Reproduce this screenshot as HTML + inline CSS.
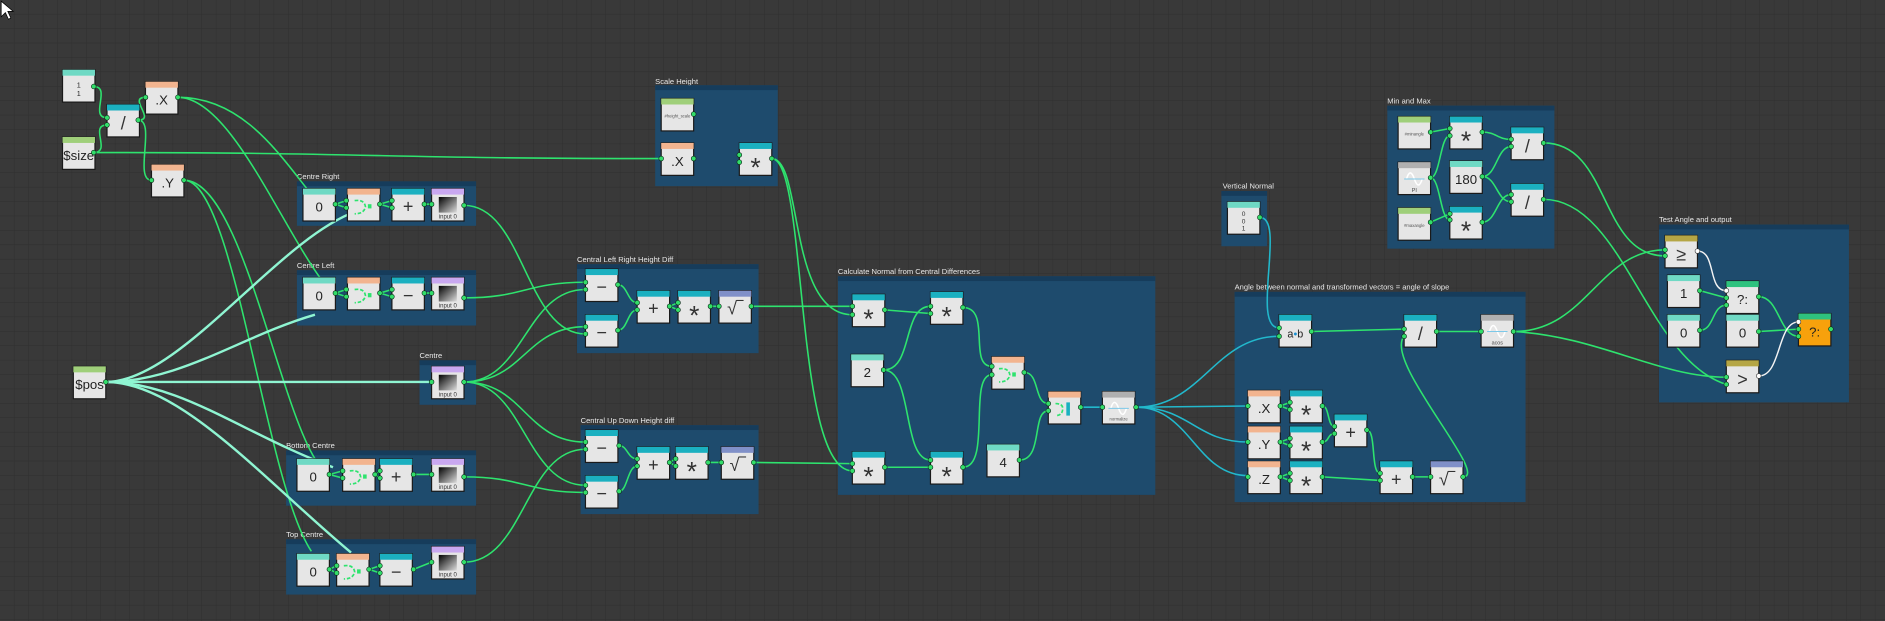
<!DOCTYPE html>
<html><head><meta charset="utf-8"><style>
html,body{margin:0;padding:0;background:#383838;overflow:hidden}
svg{display:block}
text{font-family:"Liberation Sans",sans-serif}
.w{fill:none;stroke:#2ee36e;stroke-width:1.3}
.m{fill:none;stroke:#8ff5d2;stroke-width:2}
.c{fill:none;stroke:#22b8cc;stroke-width:1.3}
.wh{fill:none;stroke:#f4f4f4;stroke-width:1.2}
.g{fill:#1e4b6d}
.gh{fill:#163c5b}
.lbl{font-size:6.3px;fill:#e8e8e8}
.sym{font-size:15px;fill:#333;text-anchor:middle}
.ast{font-size:22px;fill:#333;text-anchor:middle}
.num{font-size:11px;fill:#222;text-anchor:middle}
.tiny{font-size:3.5px;fill:#555;text-anchor:middle}
</style></head><body>
<svg width="1885" height="621" viewBox="0 0 1568 517" preserveAspectRatio="none" xmlns="http://www.w3.org/2000/svg">
<defs>
<pattern id="grid" width="12" height="12" patternUnits="userSpaceOnUse">
<rect width="12" height="12" fill="#393939"/>
<path d="M12 0V12H0" fill="none" stroke="#2f2f2f" stroke-width="0.8"/>
</pattern>
<linearGradient id="ig" x1="0" y1="0" x2="1" y2="1"><stop offset="0" stop-color="#000"/><stop offset="1" stop-color="#ddd"/></linearGradient>
<g id="body"><rect x="0" y="0" width="27" height="27" fill="#e6e6e6" stroke="#1a1a1a" stroke-width="1"/></g>
<g id="inp"><rect x="6" y="7" width="15" height="13" fill="url(#ig)"/><text x="13.5" y="25" style="font-size:5px;fill:#333;text-anchor:middle">input 0</text></g>
<g id="comb"><path d="M6 10 Q14 9 15 15 Q14 21 6 21" fill="none" stroke="#2ee36e" stroke-width="1.4" stroke-dasharray="3 1.5"/><rect x="17" y="13" width="3" height="3.5" fill="#2ee36e"/></g>
<g id="cos"><path d="M7 14 Q10 4 13.5 14 Q17 24 20 14" fill="none" stroke="#fff" stroke-width="1.3"/><path d="M5 14H22" stroke="#7cc8e8" stroke-width="0.8"/></g>
</defs>
<rect width="1568" height="517" fill="url(#grid)"/>
<path d="M1 1 L1 14 L4.5 10.5 L7 16 L9 15 L6.5 9.5 L11 9.5 Z" fill="#fff" stroke="#000" stroke-width="0.6"/>

<g>
<text class="lbl" x="545" y="70">Scale Height</text><rect class="g" x="545" y="71" width="102" height="84"/><rect class="gh" x="545" y="71" width="102" height="4"/>
<text class="lbl" x="247" y="149">Centre Right</text><rect class="g" x="247" y="151" width="149" height="37"/><rect class="gh" x="247" y="151" width="149" height="4"/>
<text class="lbl" x="247" y="223">Centre Left</text><rect class="g" x="247" y="225" width="149" height="46"/><rect class="gh" x="247" y="225" width="149" height="4"/>
<text class="lbl" x="349" y="298">Centre</text><rect class="g" x="349" y="300" width="47" height="37"/><rect class="gh" x="349" y="300" width="47" height="4"/>
<text class="lbl" x="238" y="373">Bottom Centre</text><rect class="g" x="238" y="375" width="158" height="46"/><rect class="gh" x="238" y="375" width="158" height="4"/>
<text class="lbl" x="238" y="447">Top Centre</text><rect class="g" x="238" y="449" width="158" height="46"/><rect class="gh" x="238" y="449" width="158" height="4"/>
<text class="lbl" x="480" y="218">Central Left Right Height Diff</text><rect class="g" x="480" y="220" width="151" height="74"/><rect class="gh" x="480" y="220" width="151" height="4"/>
<text class="lbl" x="483" y="352">Central Up Down Height diff</text><rect class="g" x="483" y="354" width="148" height="74"/><rect class="gh" x="483" y="354" width="148" height="4"/>
<text class="lbl" x="697" y="228">Calculate Normal from Central Differences</text><rect class="g" x="697" y="230" width="264" height="182"/><rect class="gh" x="697" y="230" width="264" height="4"/>
<text class="lbl" x="1017" y="157">Vertical Normal</text><rect class="g" x="1016" y="159" width="38" height="46"/><rect class="gh" x="1016" y="159" width="38" height="4"/>
<text class="lbl" x="1027" y="241">Angle between normal and transformed vectors = angle of slope</text><rect class="g" x="1027" y="243" width="242" height="175"/><rect class="gh" x="1027" y="243" width="242" height="4"/>
<text class="lbl" x="1154" y="86">Min and Max</text><rect class="g" x="1154" y="88" width="139" height="119"/><rect class="gh" x="1154" y="88" width="139" height="4"/>
<text class="lbl" x="1380" y="185">Test Angle and output</text><rect class="g" x="1380" y="187" width="158" height="148"/><rect class="gh" x="1380" y="187" width="158" height="4"/>
</g>

<g>
<path class="w" d="M78 72 C93 72 74 98 89 98"/>
<path class="w" d="M78 127 C93 127 74 104 89 104"/>
<path class="w" d="M115 100 C130 100 106 81 121 81"/>
<path class="w" d="M115 100 C130 100 111 150 126 150"/>
<path class="w" d="M78 127 C314 127 314 132 550 132"/>
<path class="w" d="M148 81 C200 81 230 125 256 158"/>
<path class="w" d="M148 81 C190 81 230 180 266 231"/>
<path class="w" d="M153 150 C200 150 230 330 262 382"/>
<path class="w" d="M153 150 C195 150 220 400 259 459"/>
<path class="m" d="M88 318 C150 318 230 200 296 176"/>
<path class="m" d="M88 318 C150 318 200 280 262 262"/>
<path class="m" d="M88 318 L359 318"/>
<path class="m" d="M88 318 C150 318 200 360 277 389"/>
<path class="m" d="M88 318 C150 318 220 400 292 460"/>
<path class="w" d="M279 170 L288 167 M279 170 L288 173 M316 170 L326 167 M316 170 L326 173 M353 170 L359 170"/>
<path class="w" d="M279 244 L288 241 M279 244 L288 247 M316 244 L326 241 M316 244 L326 247 M353 244 L359 244"/>
<path class="w" d="M274 395 L285 392 M274 395 L285 398 M312 395 L316 392 M312 395 L316 398 M344 395 L359 395"/>
<path class="w" d="M274 474 L280 471 M274 474 L280 477 M307 474 L316 471 M307 474 L316 477 M344 474 L359 468"/>
<path class="w" d="M386 171 C436 171 437 278 487 278"/>
<path class="w" d="M386 248 C436 248 437 235 487 235"/>
<path class="w" d="M386 318 C436 318 437 241 487 241"/>
<path class="w" d="M386 318 C436 318 437 272 487 272"/>
<path class="w" d="M386 318 C436 318 437 368 487 368"/>
<path class="w" d="M386 318 C436 318 437 404 487 404"/>
<path class="w" d="M386 397 C436 397 437 410 487 410"/>
<path class="w" d="M386 468 C436 468 437 374 487 374"/>
<path class="w" d="M514 237 C522 237 522 252 530 252 M514 275 C522 275 522 258 530 258 M557 255 L564 252 M557 255 L564 258 M591 255 L598 255"/>
<path class="w" d="M515 371 C522 371 522 382 530 382 M515 409 C522 409 522 388 530 388 M557 385 L562 382 M557 385 L562 388 M589 385 L600 385"/>
<path class="w" d="M625 255 L709 255"/>
<path class="w" d="M627 385 L709 386"/>
<path class="w" d="M642 132 C668 132 655 262 709 262"/>
<path class="w" d="M642 132 C672 132 660 392 709 392"/>
<path class="w" d="M736 258 L774 261"/>
<path class="w" d="M735 308 C760 308 750 255 774 255"/>
<path class="w" d="M735 308 C760 308 750 383 774 383"/>
<path class="w" d="M736 389 L774 389"/>
<path class="w" d="M801 256 C825 256 805 305 825 305"/>
<path class="w" d="M801 389 C825 389 805 312 825 312"/>
<path class="w" d="M852 310 C865 310 860 336 872 336"/>
<path class="w" d="M848 383 C868 383 858 342 872 342"/>
<path class="c" d="M899 339 L917 339"/>
<path class="c" d="M945 339 C1000 339 1010 280 1064 280"/>
<path class="c" d="M945 339 L1038 338"/>
<path class="c" d="M945 339 C990 339 995 368 1038 368"/>
<path class="c" d="M945 339 C990 339 995 396 1038 396"/>
<path class="c" d="M1048 181 C1070 181 1040 273 1064 273"/>
<path class="w" d="M1065 338 L1073 335 M1065 338 L1073 341 M1065 368 L1073 365 M1065 368 L1073 371 M1065 397 L1073 394 M1065 397 L1073 400"/>
<path class="w" d="M1100 338 C1106 338 1104 355 1110 355 M1100 368 C1106 368 1104 361 1110 361"/>
<path class="w" d="M1137 358 C1145 358 1140 394 1148 394 M1100 397 L1148 400 M1175 397 L1190 397"/>
<path class="w" d="M1091 276 L1168 274"/>
<path class="w" d="M1217 397 C1240 397 1150 300 1168 280"/>
<path class="w" d="M1195 276 L1232 276"/>
<path class="w" d="M1259 276 C1320 276 1330 208 1385 208"/>
<path class="w" d="M1259 276 C1330 280 1380 314 1436 314"/>
<path class="w" d="M1190 110 L1206 107"/>
<path class="w" d="M1190 148 C1198 148 1198 113 1206 113"/>
<path class="w" d="M1190 148 C1198 148 1198 183 1206 183"/>
<path class="w" d="M1190 185 L1206 178"/>
<path class="w" d="M1233 110 C1245 110 1245 116 1257 116"/>
<path class="w" d="M1233 147 C1245 147 1245 122 1257 122"/>
<path class="w" d="M1233 147 C1245 147 1245 168 1257 168"/>
<path class="w" d="M1233 185 C1245 185 1245 162 1257 162"/>
<path class="w" d="M1284 119 C1340 119 1330 213 1385 213"/>
<path class="w" d="M1284 166 C1350 166 1370 300 1436 320"/>
<path class="wh" d="M1412 209 C1428 209 1420 242 1436 242"/>
<path class="w" d="M1414 242 L1436 248"/>
<path class="w" d="M1414 275 C1426 275 1424 254 1436 254"/>
<path class="w" d="M1463 247 C1480 247 1480 280 1496 280"/>
<path class="w" d="M1463 276 L1496 274"/>
<path class="wh" d="M1463 313 C1482 313 1478 268 1496 268"/>
</g>

<g>
<g transform="translate(52,58)"><use href="#body"/><rect width="27" height="5" fill="#6fd9c4"/><text x="13.5" y="15" style="font-size:6px;fill:#222;text-anchor:middle">1</text><text x="13.5" y="22" style="font-size:6px;fill:#222;text-anchor:middle">1</text></g>
<g transform="translate(89,87)"><use href="#body"/><rect width="27" height="5" fill="#1bb0c0"/><text class="sym" x="13.5" y="21">/</text></g>
<g transform="translate(121,68)"><use href="#body"/><rect width="27" height="5" fill="#f2b48f"/><text class="num" x="13.5" y="19">.X</text></g>
<g transform="translate(52,114)"><use href="#body"/><rect width="27" height="5" fill="#9fcf7a"/><text class="num" x="13.5" y="19">$size</text></g>
<g transform="translate(126,137)"><use href="#body"/><rect width="27" height="5" fill="#f2b48f"/><text class="num" x="13.5" y="19">.Y</text></g>
<g transform="translate(61,305)"><use href="#body"/><rect width="27" height="5" fill="#9fcf7a"/><text class="num" x="13.5" y="19">$pos</text></g>
<g transform="translate(550,82)"><use href="#body"/><rect width="27" height="5" fill="#9fcf7a"/><text class="tiny" x="13.5" y="16">#height_scale</text></g>
<g transform="translate(550,119)"><use href="#body"/><rect width="27" height="5" fill="#f2b48f"/><text class="num" x="13.5" y="19">.X</text></g>
<g transform="translate(615,119)"><use href="#body"/><rect width="27" height="5" fill="#1bb0c0"/><text class="ast" x="13.5" y="28">*</text></g>
<g transform="translate(252,157)"><use href="#body"/><rect width="27" height="5" fill="#6fd9c4"/><text class="num" x="13.5" y="19">0</text></g>
<g transform="translate(289,157)"><use href="#body"/><rect width="27" height="5" fill="#f2b48f"/><use href="#comb"/></g>
<g transform="translate(326,157)"><use href="#body"/><rect width="27" height="5" fill="#1bb0c0"/><text class="sym" x="13.5" y="20">+</text></g>
<g transform="translate(359,157)"><use href="#body"/><rect width="27" height="5" fill="#c9a8f0"/><use href="#inp"/></g>
<g transform="translate(252,231)"><use href="#body"/><rect width="27" height="5" fill="#6fd9c4"/><text class="num" x="13.5" y="19">0</text></g>
<g transform="translate(289,231)"><use href="#body"/><rect width="27" height="5" fill="#f2b48f"/><use href="#comb"/></g>
<g transform="translate(326,231)"><use href="#body"/><rect width="27" height="5" fill="#1bb0c0"/><text class="sym" x="13.5" y="20">−</text></g>
<g transform="translate(359,231)"><use href="#body"/><rect width="27" height="5" fill="#c9a8f0"/><use href="#inp"/></g>
<g transform="translate(359,305)"><use href="#body"/><rect width="27" height="5" fill="#c9a8f0"/><use href="#inp"/></g>
<g transform="translate(247,382)"><use href="#body"/><rect width="27" height="5" fill="#6fd9c4"/><text class="num" x="13.5" y="19">0</text></g>
<g transform="translate(285,382)"><use href="#body"/><rect width="27" height="5" fill="#f2b48f"/><use href="#comb"/></g>
<g transform="translate(316,382)"><use href="#body"/><rect width="27" height="5" fill="#1bb0c0"/><text class="sym" x="13.5" y="20">+</text></g>
<g transform="translate(359,382)"><use href="#body"/><rect width="27" height="5" fill="#c9a8f0"/><use href="#inp"/></g>
<g transform="translate(247,461)"><use href="#body"/><rect width="27" height="5" fill="#6fd9c4"/><text class="num" x="13.5" y="19">0</text></g>
<g transform="translate(280,461)"><use href="#body"/><rect width="27" height="5" fill="#f2b48f"/><use href="#comb"/></g>
<g transform="translate(316,461)"><use href="#body"/><rect width="27" height="5" fill="#1bb0c0"/><text class="sym" x="13.5" y="20">−</text></g>
<g transform="translate(359,455)"><use href="#body"/><rect width="27" height="5" fill="#c9a8f0"/><use href="#inp"/></g>
<g transform="translate(487,224)"><use href="#body"/><rect width="27" height="5" fill="#1bb0c0"/><text class="sym" x="13.5" y="20">−</text></g>
<g transform="translate(487,262)"><use href="#body"/><rect width="27" height="5" fill="#1bb0c0"/><text class="sym" x="13.5" y="20">−</text></g>
<g transform="translate(530,242)"><use href="#body"/><rect width="27" height="5" fill="#1bb0c0"/><text class="sym" x="13.5" y="20">+</text></g>
<g transform="translate(564,242)"><use href="#body"/><rect width="27" height="5" fill="#1bb0c0"/><text class="ast" x="13.5" y="28">*</text></g>
<g transform="translate(598,242)"><use href="#body"/><rect width="27" height="5" fill="#8090c8"/><text class="sym" x="13.5" y="20">√‾</text></g>
<g transform="translate(487,358)"><use href="#body"/><rect width="27" height="5" fill="#1bb0c0"/><text class="sym" x="13.5" y="20">−</text></g>
<g transform="translate(487,396)"><use href="#body"/><rect width="27" height="5" fill="#1bb0c0"/><text class="sym" x="13.5" y="20">−</text></g>
<g transform="translate(530,372)"><use href="#body"/><rect width="27" height="5" fill="#1bb0c0"/><text class="sym" x="13.5" y="20">+</text></g>
<g transform="translate(562,372)"><use href="#body"/><rect width="27" height="5" fill="#1bb0c0"/><text class="ast" x="13.5" y="28">*</text></g>
<g transform="translate(600,372)"><use href="#body"/><rect width="27" height="5" fill="#8090c8"/><text class="sym" x="13.5" y="20">√‾</text></g>
<g transform="translate(709,245)"><use href="#body"/><rect width="27" height="5" fill="#1bb0c0"/><text class="ast" x="13.5" y="28">*</text></g>
<g transform="translate(774,243)"><use href="#body"/><rect width="27" height="5" fill="#1bb0c0"/><text class="ast" x="13.5" y="28">*</text></g>
<g transform="translate(708,295)"><use href="#body"/><rect width="27" height="5" fill="#6fd9c4"/><text class="num" x="13.5" y="19">2</text></g>
<g transform="translate(825,297)"><use href="#body"/><rect width="27" height="5" fill="#f2b48f"/><use href="#comb"/></g>
<g transform="translate(872,326)"><use href="#body"/><rect width="27" height="5" fill="#f2b48f"/><path d="M6 10 Q12 10 12 14 Q12 20 6 20" fill="none" stroke="#2ee36e" stroke-width="1.4" stroke-dasharray="3 1.5"/><rect x="15" y="9" width="3" height="11" fill="#1bb0c0"/></g>
<g transform="translate(917,326)"><use href="#body"/><rect width="27" height="5" fill="#b0b0b0"/><use href="#cos"/><text class="tiny" x="13.5" y="24">normalize</text></g>
<g transform="translate(709,376)"><use href="#body"/><rect width="27" height="5" fill="#1bb0c0"/><text class="ast" x="13.5" y="28">*</text></g>
<g transform="translate(774,376)"><use href="#body"/><rect width="27" height="5" fill="#1bb0c0"/><text class="ast" x="13.5" y="28">*</text></g>
<g transform="translate(821,370)"><use href="#body"/><rect width="27" height="5" fill="#6fd9c4"/><text class="num" x="13.5" y="19">4</text></g>
<g transform="translate(1021,168)"><use href="#body"/><rect width="27" height="5" fill="#6fd9c4"/><text x="13.5" y="12" style="font-size:5.5px;fill:#333;text-anchor:middle">0</text><text x="13.5" y="18" style="font-size:5.5px;fill:#333;text-anchor:middle">0</text><text x="13.5" y="24" style="font-size:5.5px;fill:#333;text-anchor:middle">1</text></g>
<g transform="translate(1064,262)"><use href="#body"/><rect width="27" height="5" fill="#1bb0c0"/><text x="13.5" y="19" style="font-size:9px;fill:#222;text-anchor:middle">a<tspan fill="#1b8fd0">•</tspan>b</text></g>
<g transform="translate(1168,262)"><use href="#body"/><rect width="27" height="5" fill="#1bb0c0"/><text class="sym" x="13.5" y="21">/</text></g>
<g transform="translate(1232,262)"><use href="#body"/><rect width="27" height="5" fill="#b0b0b0"/><use href="#cos"/><text x="13.5" y="25" style="font-size:4.5px;fill:#444;text-anchor:middle">acos</text></g>
<g transform="translate(1038,325)"><use href="#body"/><rect width="27" height="5" fill="#f2b48f"/><text class="num" x="13.5" y="19">.X</text></g>
<g transform="translate(1073,325)"><use href="#body"/><rect width="27" height="5" fill="#1bb0c0"/><text class="ast" x="13.5" y="28">*</text></g>
<g transform="translate(1038,355)"><use href="#body"/><rect width="27" height="5" fill="#f2b48f"/><text class="num" x="13.5" y="19">.Y</text></g>
<g transform="translate(1073,355)"><use href="#body"/><rect width="27" height="5" fill="#1bb0c0"/><text class="ast" x="13.5" y="28">*</text></g>
<g transform="translate(1110,345)"><use href="#body"/><rect width="27" height="5" fill="#1bb0c0"/><text class="sym" x="13.5" y="20">+</text></g>
<g transform="translate(1038,384)"><use href="#body"/><rect width="27" height="5" fill="#f2b48f"/><text class="num" x="13.5" y="19">.Z</text></g>
<g transform="translate(1073,384)"><use href="#body"/><rect width="27" height="5" fill="#1bb0c0"/><text class="ast" x="13.5" y="28">*</text></g>
<g transform="translate(1148,384)"><use href="#body"/><rect width="27" height="5" fill="#1bb0c0"/><text class="sym" x="13.5" y="20">+</text></g>
<g transform="translate(1190,384)"><use href="#body"/><rect width="27" height="5" fill="#8090c8"/><text class="sym" x="13.5" y="20">√‾</text></g>
<g transform="translate(1163,97)"><use href="#body"/><rect width="27" height="5" fill="#9fcf7a"/><text class="tiny" x="13.5" y="16">#minangle</text></g>
<g transform="translate(1206,97)"><use href="#body"/><rect width="27" height="5" fill="#1bb0c0"/><text class="ast" x="13.5" y="28">*</text></g>
<g transform="translate(1163,135)"><use href="#body"/><rect width="27" height="5" fill="#b0b0b0"/><use href="#cos"/><text x="13.5" y="25" style="font-size:4.5px;fill:#444;text-anchor:middle">PI</text></g>
<g transform="translate(1206,134)"><use href="#body"/><rect width="27" height="5" fill="#6fd9c4"/><text class="num" x="13.5" y="19">180</text></g>
<g transform="translate(1163,173)"><use href="#body"/><rect width="27" height="5" fill="#9fcf7a"/><text class="tiny" x="13.5" y="16">#maxangle</text></g>
<g transform="translate(1206,172)"><use href="#body"/><rect width="27" height="5" fill="#1bb0c0"/><text class="ast" x="13.5" y="28">*</text></g>
<g transform="translate(1257,106)"><use href="#body"/><rect width="27" height="5" fill="#1bb0c0"/><text class="sym" x="13.5" y="21">/</text></g>
<g transform="translate(1257,153)"><use href="#body"/><rect width="27" height="5" fill="#1bb0c0"/><text class="sym" x="13.5" y="21">/</text></g>
<g transform="translate(1385,196)"><use href="#body"/><rect width="27" height="5" fill="#b5a645"/><text class="sym" x="13.5" y="21">≥</text></g>
<g transform="translate(1387,229)"><use href="#body"/><rect width="27" height="5" fill="#6fd9c4"/><text class="num" x="13.5" y="19">1</text></g>
<g transform="translate(1436,234)"><use href="#body"/><rect width="27" height="5" fill="#2ec27e"/><text class="num" x="13.5" y="19">?:</text></g>
<g transform="translate(1387,262)"><use href="#body"/><rect width="27" height="5" fill="#6fd9c4"/><text class="num" x="13.5" y="19">0</text></g>
<g transform="translate(1436,262)"><use href="#body"/><rect width="27" height="5" fill="#6fd9c4"/><text class="num" x="13.5" y="19">0</text></g>
<g transform="translate(1436,300)"><use href="#body"/><rect width="27" height="5" fill="#b5a645"/><text class="sym" x="13.5" y="21">&gt;</text></g>
<g transform="translate(1496,261)"><rect width="27" height="27" fill="#f7a10c" stroke="#1a1a1a"/><rect width="27" height="5" fill="#2ec27e"/><text class="num" x="13.5" y="19">?:</text></g>
</g>

<g fill="#33dd6a" stroke="#0d2a1a" stroke-width="0.5">
<circle cx="78" cy="72" r="2"/><circle cx="89" cy="98" r="2"/><circle cx="89" cy="104" r="2"/><circle cx="78" cy="127" r="2"/><circle cx="115" cy="100" r="2"/><circle cx="121" cy="81" r="2"/><circle cx="148" cy="81" r="2"/><circle cx="126" cy="150" r="2"/><circle cx="153" cy="150" r="2"/><circle cx="88" cy="318" r="2"/>
<circle cx="550" cy="132" r="2"/><circle cx="577" cy="95" r="2"/><circle cx="577" cy="132" r="2"/><circle cx="615" cy="129" r="2"/><circle cx="615" cy="135" r="2"/><circle cx="642" cy="132" r="2"/>
<circle cx="279" cy="170" r="2"/><circle cx="288" cy="167" r="2"/><circle cx="288" cy="173" r="2"/><circle cx="316" cy="170" r="2"/><circle cx="326" cy="167" r="2"/><circle cx="326" cy="173" r="2"/><circle cx="353" cy="170" r="2"/><circle cx="359" cy="170" r="2"/><circle cx="386" cy="171" r="2"/>
<circle cx="279" cy="244" r="2"/><circle cx="288" cy="241" r="2"/><circle cx="288" cy="247" r="2"/><circle cx="316" cy="244" r="2"/><circle cx="326" cy="241" r="2"/><circle cx="326" cy="247" r="2"/><circle cx="353" cy="244" r="2"/><circle cx="359" cy="244" r="2"/><circle cx="386" cy="248" r="2"/>
<circle cx="359" cy="318" r="2"/><circle cx="386" cy="318" r="2"/>
<circle cx="274" cy="395" r="2"/><circle cx="285" cy="392" r="2"/><circle cx="285" cy="398" r="2"/><circle cx="312" cy="395" r="2"/><circle cx="316" cy="392" r="2"/><circle cx="316" cy="398" r="2"/><circle cx="344" cy="395" r="2"/><circle cx="359" cy="395" r="2"/><circle cx="386" cy="397" r="2"/>
<circle cx="274" cy="474" r="2"/><circle cx="280" cy="471" r="2"/><circle cx="280" cy="477" r="2"/><circle cx="307" cy="474" r="2"/><circle cx="316" cy="471" r="2"/><circle cx="316" cy="477" r="2"/><circle cx="344" cy="474" r="2"/><circle cx="359" cy="468" r="2"/><circle cx="386" cy="468" r="2"/>
<circle cx="487" cy="235" r="2"/><circle cx="487" cy="241" r="2"/><circle cx="487" cy="272" r="2"/><circle cx="487" cy="278" r="2"/><circle cx="514" cy="237" r="2"/><circle cx="514" cy="275" r="2"/><circle cx="530" cy="252" r="2"/><circle cx="530" cy="258" r="2"/><circle cx="557" cy="255" r="2"/><circle cx="564" cy="252" r="2"/><circle cx="564" cy="258" r="2"/><circle cx="591" cy="255" r="2"/><circle cx="598" cy="255" r="2"/><circle cx="625" cy="255" r="2"/>
<circle cx="487" cy="368" r="2"/><circle cx="487" cy="374" r="2"/><circle cx="487" cy="404" r="2"/><circle cx="487" cy="410" r="2"/><circle cx="515" cy="371" r="2"/><circle cx="515" cy="409" r="2"/><circle cx="530" cy="382" r="2"/><circle cx="530" cy="388" r="2"/><circle cx="557" cy="385" r="2"/><circle cx="562" cy="382" r="2"/><circle cx="562" cy="388" r="2"/><circle cx="589" cy="385" r="2"/><circle cx="600" cy="385" r="2"/><circle cx="627" cy="385" r="2"/>
<circle cx="709" cy="255" r="2"/><circle cx="709" cy="262" r="2"/><circle cx="736" cy="258" r="2"/><circle cx="774" cy="255" r="2"/><circle cx="774" cy="261" r="2"/><circle cx="801" cy="256" r="2"/><circle cx="735" cy="308" r="2"/><circle cx="825" cy="305" r="2"/><circle cx="825" cy="312" r="2"/><circle cx="852" cy="310" r="2"/><circle cx="872" cy="336" r="2"/><circle cx="872" cy="342" r="2"/><circle cx="899" cy="339" r="2"/><circle cx="917" cy="339" r="2"/><circle cx="945" cy="339" r="2"/>
<circle cx="709" cy="386" r="2"/><circle cx="709" cy="392" r="2"/><circle cx="736" cy="389" r="2"/><circle cx="774" cy="383" r="2"/><circle cx="774" cy="389" r="2"/><circle cx="801" cy="389" r="2"/><circle cx="848" cy="383" r="2"/>
<circle cx="1048" cy="181" r="2"/><circle cx="1064" cy="273" r="2"/><circle cx="1064" cy="280" r="2"/><circle cx="1091" cy="276" r="2"/><circle cx="1168" cy="274" r="2"/><circle cx="1168" cy="280" r="2"/><circle cx="1195" cy="276" r="2"/><circle cx="1232" cy="276" r="2"/><circle cx="1259" cy="276" r="2"/>
<circle cx="1038" cy="338" r="2"/><circle cx="1065" cy="338" r="2"/><circle cx="1073" cy="335" r="2"/><circle cx="1073" cy="341" r="2"/><circle cx="1100" cy="338" r="2"/><circle cx="1038" cy="368" r="2"/><circle cx="1065" cy="368" r="2"/><circle cx="1073" cy="365" r="2"/><circle cx="1073" cy="371" r="2"/><circle cx="1100" cy="368" r="2"/><circle cx="1110" cy="355" r="2"/><circle cx="1110" cy="361" r="2"/><circle cx="1137" cy="358" r="2"/>
<circle cx="1038" cy="397" r="2"/><circle cx="1065" cy="397" r="2"/><circle cx="1073" cy="394" r="2"/><circle cx="1073" cy="400" r="2"/><circle cx="1100" cy="397" r="2"/><circle cx="1148" cy="394" r="2"/><circle cx="1148" cy="400" r="2"/><circle cx="1175" cy="397" r="2"/><circle cx="1190" cy="397" r="2"/><circle cx="1217" cy="397" r="2"/>
<circle cx="1190" cy="110" r="2"/><circle cx="1206" cy="107" r="2"/><circle cx="1206" cy="113" r="2"/><circle cx="1190" cy="148" r="2"/><circle cx="1233" cy="147" r="2"/><circle cx="1190" cy="185" r="2"/><circle cx="1206" cy="178" r="2"/><circle cx="1206" cy="183" r="2"/><circle cx="1233" cy="110" r="2"/><circle cx="1233" cy="185" r="2"/><circle cx="1257" cy="116" r="2"/><circle cx="1257" cy="122" r="2"/><circle cx="1257" cy="162" r="2"/><circle cx="1257" cy="168" r="2"/><circle cx="1284" cy="119" r="2"/><circle cx="1284" cy="166" r="2"/>
<circle cx="1385" cy="208" r="2"/><circle cx="1385" cy="213" r="2"/><circle cx="1414" cy="242" r="2"/><circle cx="1436" cy="248" r="2"/><circle cx="1436" cy="254" r="2"/><circle cx="1414" cy="275" r="2"/><circle cx="1463" cy="247" r="2"/><circle cx="1463" cy="276" r="2"/><circle cx="1436" cy="314" r="2"/><circle cx="1436" cy="320" r="2"/><circle cx="1496" cy="274" r="2"/><circle cx="1496" cy="280" r="2"/><circle cx="1523" cy="274" r="2"/>
</g>
<g fill="#fff" stroke="#333" stroke-width="0.5"><circle cx="1412" cy="209" r="2"/><circle cx="1436" cy="242" r="2"/><circle cx="1463" cy="313" r="2"/><circle cx="1496" cy="268" r="2"/></g>
</svg>
</body></html>
